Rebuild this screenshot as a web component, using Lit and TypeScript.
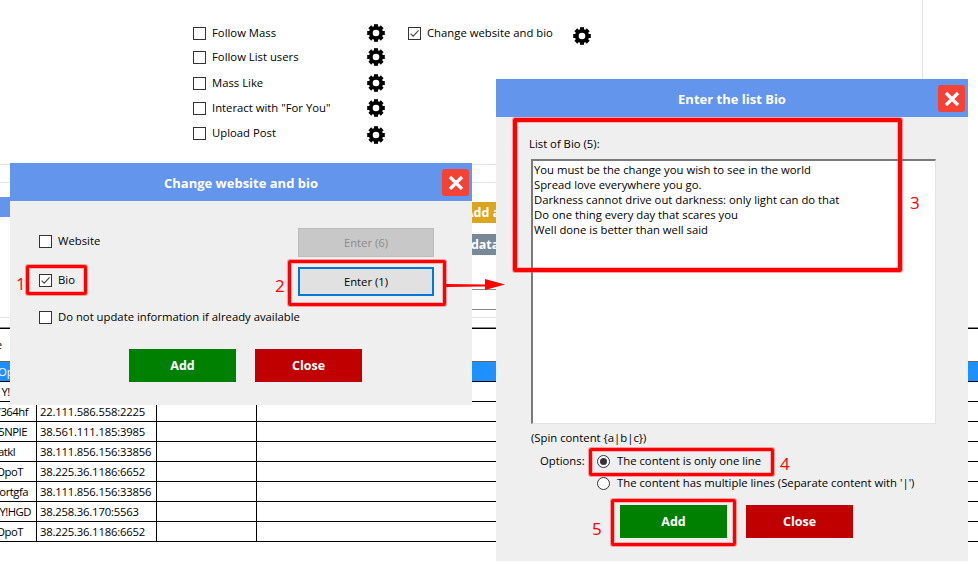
import { LitElement, html, css, svg } from "lit";
import { customElement } from "lit/decorators.js";

const gear = (low = false) => html`<svg class="gear ${low ? "low" : ""}" viewBox="0 0 18 18" aria-hidden="true">
  ${[0, 45, 90, 135, 180, 225, 270, 315].map(
    (a) => svg`<rect x="7" y="0.2" width="4" height="4" transform="rotate(${a} 9 9)" fill="#000"></rect>`
  )}
  <circle cx="9" cy="9" r="5.2" fill="none" stroke="#000" stroke-width="3.8"></circle>
</svg>`;

const checkbox = (checked = false) => html`<span class="box">
  ${checked
    ? html`<svg viewBox="0 0 11 11" aria-hidden="true"><path d="M1.6 5.6 L4.2 8.2 L9.6 2.4" fill="none" stroke="#444" stroke-width="1.1"></path></svg>`
    : ""}
</span>`;

const check = (label: string, checked = false) =>
  html`<label class="chk">${checkbox(checked)}<span>${label}</span></label>`;

const closeBtn = () => html`<div class="x">
  <svg viewBox="0 0 16 16" aria-hidden="true"><path d="M2 2 L14 14 M14 2 L2 14" stroke="#fff" stroke-width="3.2" fill="none"></path></svg>
</div>`;

const OPTIONS = [
  { label: "Follow Mass", h: 24 },
  { label: "Follow List users", h: 24 },
  { label: "Mass Like", h: 28 },
  { label: 'Interact with "For You"', h: 22 },
  { label: "Upload Post", h: 28 },
];

const ROWS = [
  { user: "Y!HGD", end: 33, proxy: "" },
  { user: "7364hf", end: 28, proxy: "22.111.586.558:2225" },
  { user: "5NPIE", end: 27, proxy: "38.561.111.185:3985" },
  { user: "atkl", end: 15, proxy: "38.111.856.156:33856" },
  { user: "OpoT", end: 23, proxy: "38.225.36.1186:6652" },
  { user: "ortgfa", end: 28, proxy: "38.111.856.156:33856" },
  { user: "Y!HGD", end: 31, proxy: "38.258.36.170:5563" },
  { user: "OpoT", end: 23, proxy: "38.225.36.1186:6652" },
];

const BIO = `You must be the change you wish to see in the world
Spread love everywhere you go.
Darkness cannot drive out darkness: only light can do that
Do one thing every day that scares you
Well done is better than well said`;

@customElement("app-root")
export class AppRoot extends LitElement {
  static styles = css`
    :host {
      display: block;
      position: relative;
      width: 978px;
      height: 571px;
      overflow: hidden;
      background: #fff;
      color: #000;
      font-family: "Open Sans", "Noto Sans", sans-serif;
      font-size: 11.3px;
      line-height: 16px;
    }
    .upper {
      width: 922px;
      height: 327px;
      box-sizing: content-box;
      border-right: 1px solid #e4e4e4;
      display: flex;
      flex-direction: column;
    }
    .options {
      height: 165px;
      flex: none;
      display: flex;
      padding: 21px 0 0 193px;
      box-sizing: border-box;
      border-bottom: 1px solid #e4e4e4;
    }
    .col {
      width: 192px;
      display: flex;
      flex-direction: column;
    }
    .opt {
      display: flex;
      align-items: center;
      justify-content: space-between;
    }
    .opt .gear.low {
      margin-top: 4px;
    }
    .second {
      margin-left: 23px;
      height: 24px;
      display: flex;
      align-items: center;
      gap: 20px;
    }
    .second .gear {
      margin-top: 6px;
    }
    .gear {
      width: 18px;
      height: 18px;
      flex: none;
      display: block;
    }
    .chk {
      display: flex;
      align-items: center;
      gap: 6px;
      white-space: nowrap;
    }
    .box {
      width: 13px;
      height: 13px;
      box-sizing: border-box;
      border: 1px solid #333;
      background: #fff;
      flex: none;
      display: block;
    }
    .box svg {
      display: block;
      width: 11px;
      height: 11px;
    }
    .band {
      height: 18px;
      flex: none;
      box-sizing: border-box;
      border-bottom: 1px solid #e4e4e4;
    }
    .tools {
      height: 106px;
      flex: none;
      display: flex;
      justify-content: space-between;
    }
    .tab {
      width: 300px;
      height: 20px;
      margin-top: 14px;
      background: #6495ed;
    }
    .actions {
      width: 500px;
      padding-top: 19px;
      display: flex;
      flex-direction: column;
      gap: 11px;
    }
    .action {
      height: 21px;
      box-sizing: border-box;
      color: #fff;
      font-weight: 700;
      font-size: 12.5px;
      display: flex;
      align-items: center;
      white-space: nowrap;
    }
    .gold {
      background: #daa520;
      margin-left: 40px;
      width: 120px;
      padding-left: 3px;
    }
    .slate {
      background: #778899;
      width: 160px;
    }
    .stack {
      flex: none;
      margin-left: 440px;
      width: 400px;
    }
    .stack div {
      box-sizing: border-box;
      border-top: 1px solid #888;
    }
    .stack .one {
      height: 20px;
    }
    .stack .two {
      height: 8px;
    }
    .soft {
      flex: none;
      border-top: 1px solid #e4e4e4;
    }
    .rule {
      border-top: 1px solid #888;
      border-bottom: 1px solid #000;
    }
    .caption {
      height: 32px;
      display: flex;
      align-items: center;
      justify-content: flex-end;
      width: 2px;
      white-space: nowrap;
    }
    .thead {
      height: 19px;
      border-top: 1px solid #666;
      border-bottom: 1px solid #000;
      background: #1e90ff;
      color: #fff;
      display: flex;
      align-items: center;
      white-space: nowrap;
    }
    .thead span {
      margin-left: -2px;
    }
    .row {
      display: grid;
      grid-template-columns: 37px 120px 100px 1fr;
      height: 20px;
      box-sizing: border-box;
      border-bottom: 1px solid #000;
      white-space: nowrap;
    }
    .row > div {
      border-right: 1px solid #000;
      display: flex;
      align-items: center;
      overflow: hidden;
      padding-top: 1px;
    }
    .row > div:last-child {
      border-right: none;
    }
    .row .user {
      justify-content: flex-end;
      letter-spacing: -0.5px;
    }
    .row .proxy {
      padding-left: 3px;
      letter-spacing: -0.2px;
    }
    .dialog {
      position: absolute;
      background: #efefef;
      box-sizing: border-box;
      display: flex;
      flex-direction: column;
    }
    .d1 {
      left: 10px;
      top: 163px;
      width: 462px;
      height: 242px;
    }
    .d2 {
      left: 496px;
      top: 79px;
      width: 472px;
      height: 482px;
    }
    .head {
      position: relative;
      height: 38px;
      box-sizing: border-box;
      padding-top: 1px;
      flex: none;
      background: #6495ed;
      color: #fff;
      font-weight: 700;
      font-size: 13px;
      display: flex;
      align-items: center;
      justify-content: center;
    }
    .x {
      position: absolute;
      right: 3px;
      top: 6px;
      width: 27px;
      height: 27px;
      background: #f44336;
      border-radius: 3px;
      display: flex;
      align-items: center;
      justify-content: center;
    }
    .x svg {
      width: 16px;
      height: 16px;
    }
    .d1-body {
      padding: 27px 38px 0 29px;
      display: grid;
      grid-template-columns: 1fr 136px;
      grid-auto-rows: 29px;
      row-gap: 10px;
    }
    .d1-body .chk {
      align-self: start;
      padding-top: 5px;
    }
    .enter {
      box-sizing: border-box;
      display: flex;
      align-items: center;
      justify-content: center;
      background: #e1e1e1;
      border: 2px solid #0078d7;
    }
    .enter.off {
      background: #c8c8c8;
      border: 1px solid #bcbcbc;
      color: #8b8b8b;
    }
    .d1-extra {
      margin: 13px 0 0 29px;
    }
    .footer {
      display: flex;
      gap: 19px;
    }
    .d1 .footer {
      margin: 24px 0 0 119px;
    }
    .d2 .footer {
      margin: 14px 0 0 91px;
    }
    .btn {
      width: 107px;
      height: 33px;
      color: #fff;
      font-weight: 700;
      font-size: 12.5px;
      display: flex;
      align-items: center;
      justify-content: center;
    }
    .add { background: #008000; }
    .close { background: #c00000; }
    .d2-body {
      padding: 19px 33px 0 33px;
      display: flex;
      flex-direction: column;
    }
    .list-label {
      height: 16px;
    }
    .bio {
      margin: 7px -1px 0 2px;
      height: 265px;
      box-sizing: border-box;
      background: #fff;
      border-style: solid;
      border-width: 2px 1px 1px 2px;
      border-color: #7a7a7a #e3e3e3 #e3e3e3 #7a7a7a;
      padding: 1px 0 0 1px;
      line-height: 15px;
      white-space: pre-line;
    }
    .spin {
      margin: 6px 0 0 2px;
      height: 16px;
    }
    .opts {
      margin: 7px 0 0 11px;
      display: flex;
    }
    .opts > span {
      width: 57px;
      flex: none;
    }
    .radios {
      display: flex;
      flex-direction: column;
      gap: 6px;
    }
    .radio {
      display: flex;
      align-items: center;
      gap: 7px;
      white-space: nowrap;
    }
    .dot {
      width: 13px;
      height: 13px;
      box-sizing: border-box;
      border: 1px solid #333;
      border-radius: 50%;
      background: #fff;
      flex: none;
      display: flex;
      align-items: center;
      justify-content: center;
    }
    .dot.on::after {
      content: "";
      width: 7px;
      height: 7px;
      border-radius: 50%;
      background: #333;
    }
    .mark {
      position: absolute;
      box-sizing: border-box;
      border: 3px solid #f00;
      border-radius: 2px;
      box-shadow: 0 0 0 1px rgba(255, 90, 90, 0.55), inset 0 0 0 1px rgba(255, 90, 90, 0.4);
      pointer-events: none;
    }
    .m1 { left: 26px; top: 265px; width: 61px; height: 30px; }
    .m2 { left: 288px; top: 260px; width: 158px; height: 46px; }
    .m3 { left: 513px; top: 118px; width: 389px; height: 154px; border-width: 4px; }
    .m4 { left: 589px; top: 448px; width: 185px; height: 28px; }
    .m5 { left: 611px; top: 499px; width: 125px; height: 47px; }
    .num {
      position: absolute;
      color: #f00;
      font-size: 17px;
      line-height: 20px;
      font-family: "Open Sans", sans-serif;
    }
    .n1 { left: 16px; top: 274px; }
    .n2 { left: 275px; top: 276px; }
    .n3 { left: 910px; top: 193px; }
    .n4 { left: 780px; top: 454px; }
    .n5 { left: 592px; top: 519px; }
    .arrow {
      position: absolute;
      left: 446px;
      top: 277px;
      width: 60px;
      height: 16px;
    }
  `;

  render() {
    return html`
      <div class="upper">
        <div class="options">
          <div class="col">
            ${OPTIONS.map(
              (o, i) => html`<div class="opt" style="height:${o.h}px">${check(o.label)}${gear(i === 4)}</div>`
            )}
          </div>
          <div class="second">${check("Change website and bio", true)}${gear()}</div>
        </div>
        <div class="band"></div>
        <div class="tools">
          <div class="tab"></div>
          <div class="actions">
            <div class="action gold">Add account</div>
            <div class="action slate">Update data</div>
          </div>
        </div>
        <div class="stack"><div class="one"></div><div class="two"></div></div>
        <div class="soft"></div>
      </div>
      <div class="rule"></div>
      <div class="caption"><span>Profile</span></div>
      <div class="thead"><span>Options</span></div>
      ${ROWS.map(
        (r) => html`<div class="row">
          <div class="user" style="padding-right:${36 - r.end}px"><span>${r.user}</span></div>
          <div class="proxy">${r.proxy}</div>
          <div></div>
          <div></div>
        </div>`
      )}

      <section class="dialog d1">
        <div class="head">Change website and bio${closeBtn()}</div>
        <div class="d1-body">
          ${check("Website")}
          <div class="enter off">Enter (6)</div>
          ${check("Bio", true)}
          <div class="enter">Enter (1)</div>
        </div>
        <div class="d1-extra">${check("Do not update information if already available")}</div>
        <div class="footer">
          <div class="btn add">Add</div>
          <div class="btn close">Close</div>
        </div>
      </section>

      <section class="dialog d2">
        <div class="head">Enter the list Bio${closeBtn()}</div>
        <div class="d2-body">
          <div class="list-label">List of Bio (5):</div>
          <div class="bio">${BIO}</div>
          <div class="spin">(Spin content {a|b|c})</div>
          <div class="opts">
            <span>Options:</span>
            <div class="radios">
              <div class="radio"><span class="dot on"></span>The content is only one line</div>
              <div class="radio"><span class="dot"></span>The content has multiple lines (Separate content with '|')</div>
            </div>
          </div>
          <div class="footer">
            <div class="btn add">Add</div>
            <div class="btn close">Close</div>
          </div>
        </div>
      </section>

      <div class="mark m1"></div>
      <div class="mark m2"></div>
      <div class="mark m3"></div>
      <div class="mark m4"></div>
      <div class="mark m5"></div>
      <svg class="arrow" viewBox="0 0 60 16" aria-hidden="true">
        <path d="M0 7 L39 7.5 L39 2 L59 7.5 L39 13 L39 9.5 L0 10 Z" fill="#f00"></path>
      </svg>
      <span class="num n1">1</span>
      <span class="num n2">2</span>
      <span class="num n3">3</span>
      <span class="num n4">4</span>
      <span class="num n5">5</span>
    `;
  }
}
